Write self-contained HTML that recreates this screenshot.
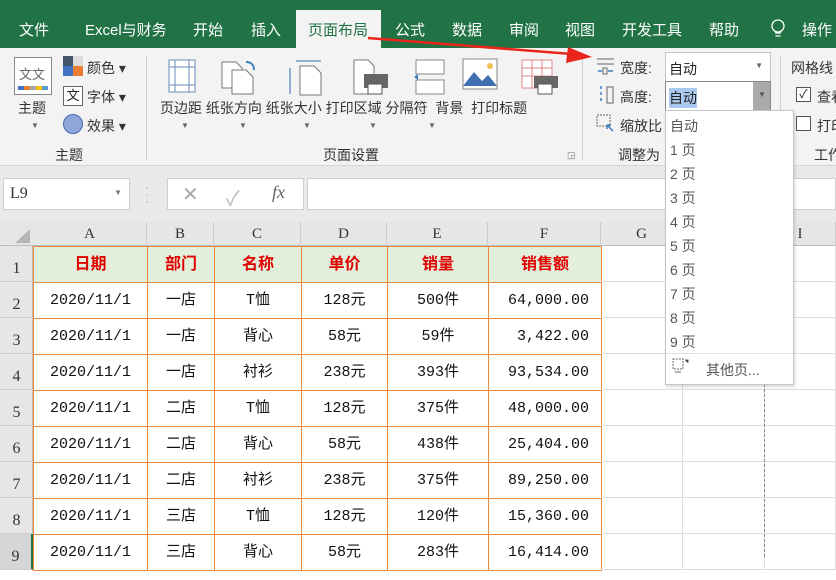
<!DOCTYPE html>
<html><head><meta charset="utf-8"><style>
*{margin:0;padding:0;box-sizing:border-box}
body{width:836px;height:557px;overflow:hidden;position:relative;background:#fff;font-family:"Liberation Sans","Noto Sans CJK SC",sans-serif;font-size:14px;color:#222}
.a{position:absolute;white-space:nowrap}
.tab{position:absolute;top:19px;color:#fff;font-size:15px}
.rb{color:#333;font-size:14px}
.grid div{position:absolute}
.cell{font-family:"Liberation Mono","Noto Sans CJK SC",monospace;font-size:15px;color:#111;text-align:center;line-height:36px}
.hd{color:#e00000;font-weight:bold;font-size:16px}
.dd{position:absolute;left:670px;font-size:14px;color:#555}
</style></head><body>
<!-- tab bar -->
<div class="a" style="left:0;top:0;width:836px;height:48px;background:#217346"></div>
<div class="a" style="left:296px;top:10px;width:85px;height:38px;background:#f3f3f3"></div>
<div class="tab" style="left:19px">文件</div>
<div class="tab" style="left:85px">Excel与财务</div>
<div class="tab" style="left:193px">开始</div>
<div class="tab" style="left:251px">插入</div>
<div class="tab" style="left:308px;color:#217346">页面布局</div>
<div class="tab" style="left:395px">公式</div>
<div class="tab" style="left:452px">数据</div>
<div class="tab" style="left:509px">审阅</div>
<div class="tab" style="left:565px">视图</div>
<div class="tab" style="left:622px">开发工具</div>
<div class="tab" style="left:709px">帮助</div>
<svg class="a" style="left:770px;top:18px" width="16" height="22"><circle cx="8" cy="8" r="6" fill="none" stroke="#fff" stroke-width="1.3"/><path d="M5 15h6M5.5 18h5" stroke="#fff" stroke-width="1.3"/></svg>
<div class="tab" style="left:802px">操作</div>
<!-- ribbon -->
<div class="a" style="left:0;top:48px;width:836px;height:118px;background:#f3f3f3;border-bottom:1px solid #d6d6d6"></div>
<div class="a" style="left:146px;top:56px;width:1px;height:104px;background:#d0d0d0"></div>
<div class="a" style="left:582px;top:56px;width:1px;height:104px;background:#d0d0d0"></div>
<div class="a" style="left:780px;top:56px;width:1px;height:104px;background:#d0d0d0"></div>
<!-- theme -->
<div class="a" style="left:14px;top:57px;width:38px;height:38px;border:1px solid #888;background:#fff"><div style="position:absolute;left:4px;top:6px;font-size:13px;color:#666">文文</div><div style="position:absolute;left:3px;bottom:4px;width:30px;height:4px;background:linear-gradient(90deg,#4472c4 20%,#ed7d31 20% 40%,#a5a5a5 40% 60%,#ffc000 60% 80%,#5b9bd5 80%)"></div></div>
<div class="a rb" style="left:18px;top:98px">主题</div>
<div class="a" style="left:31px;top:121px;font-size:8px;color:#666">▼</div>
<div class="a" style="left:63px;top:56px;width:20px;height:20px;background:linear-gradient(90deg,#44546a 50%,#ddd 50%)"><div style="position:absolute;left:0;top:10px;width:10px;height:10px;background:#4472c4"></div><div style="position:absolute;left:10px;top:10px;width:10px;height:10px;background:#ed7d31"></div></div>
<div class="a rb" style="left:87px;top:58px">颜色 ▾</div>
<div class="a" style="left:63px;top:86px;width:20px;height:20px;border:1px solid #666;background:#fff;font-size:13px;line-height:18px;text-align:center">文</div>
<div class="a rb" style="left:87px;top:87px">字体 ▾</div>
<div class="a" style="left:63px;top:114px;width:20px;height:20px;border-radius:50%;background:#8fa6d8;border:1px solid #4a6ab0"></div>
<div class="a rb" style="left:87px;top:116px">效果 ▾</div>
<div class="a rb" style="left:55px;top:145px">主题</div>
<!-- page setup icons -->
<svg class="a" style="left:167px;top:58px" width="30" height="36"><rect x="2" y="2" width="26" height="32" fill="#fff" stroke="#6b8bb8"/><path d="M8 2v32M22 2v32M2 9h26M2 27h26" stroke="#6b8bb8"/></svg>
<svg class="a" style="left:220px;top:56px" width="40" height="40"><path d="M2 6h14l6 6v20H2z" fill="#fff" stroke="#777"/><path d="M12 14h14l7 7v17H12z" fill="#fff" stroke="#777"/><path d="M26 6c6 0 8 4 8 8" fill="none" stroke="#3f7fc0" stroke-width="2"/></svg>
<svg class="a" style="left:288px;top:58px" width="36" height="38"><path d="M12 8h14l7 7v22H12z" fill="#fff" stroke="#777"/><path d="M2 10v26M8 3h25" stroke="#5b86c0" stroke-width="1.3"/></svg>
<svg class="a" style="left:352px;top:58px" width="38" height="38"><path d="M2 2h14l6 6v28H2z" fill="#fff" stroke="#777"/><rect x="12" y="16" width="24" height="14" fill="#666"/><rect x="16" y="26" width="14" height="10" fill="#fff" stroke="#555"/></svg>
<svg class="a" style="left:414px;top:58px" width="32" height="38"><rect x="2" y="2" width="28" height="14" fill="#fff" stroke="#888"/><rect x="2" y="22" width="28" height="14" fill="#fff" stroke="#888"/><path d="M0 19l4-3v6z" fill="#3f7fc0"/></svg>
<svg class="a" style="left:462px;top:58px" width="36" height="34"><rect x="1" y="1" width="34" height="30" fill="#fff" stroke="#888"/><path d="M1 28l11-14 8 9 6-6 9 11z" fill="#3f6fb0"/><circle cx="28" cy="8" r="3" fill="#f0c050"/></svg>
<svg class="a" style="left:520px;top:58px" width="40" height="38"><path d="M2 2h30v28H2z" fill="#fff" stroke="#d88"/><path d="M2 10h30M2 18h30M12 2v28M22 2v28" stroke="#d88"/><rect x="14" y="18" width="24" height="12" fill="#666"/><rect x="18" y="26" width="14" height="10" fill="#fff" stroke="#555"/></svg>
<div class="a rb" style="left:160px;top:98px">页边距 纸张方向 纸张大小 打印区域 分隔符 &nbsp;背景 &nbsp;打印标题</div>
<div class="a" style="left:181px;top:121px;font-size:8px;color:#666">▼</div>
<div class="a" style="left:239px;top:121px;font-size:8px;color:#666">▼</div>
<div class="a" style="left:303px;top:121px;font-size:8px;color:#666">▼</div>
<div class="a" style="left:369px;top:121px;font-size:8px;color:#666">▼</div>
<div class="a" style="left:428px;top:121px;font-size:8px;color:#666">▼</div>
<div class="a rb" style="left:323px;top:145px">页面设置</div>
<div class="a" style="left:567px;top:150px;font-size:9px;color:#777">◲</div>
<!-- scale to fit -->
<svg class="a" style="left:596px;top:57px" width="20" height="20"><path d="M1 2h17M1 7h17" stroke="#666"/><path d="M2 14h4M12 14h5" stroke="#3f7fc0" stroke-width="1.5"/><rect x="7" y="11" width="4" height="6" fill="none" stroke="#666"/></svg>
<div class="a rb" style="left:620px;top:58px">宽度:</div>
<div class="a" style="left:665px;top:52px;width:106px;height:30px;background:#fff;border:1px solid #c6c6c6"><span style="position:absolute;left:3px;top:6px;font-size:14px">自动</span><span style="position:absolute;right:7px;top:8px;font-size:8px;color:#666">▼</span></div>
<svg class="a" style="left:596px;top:85px" width="20" height="20"><path d="M5 1v17" stroke="#3f7fc0" stroke-width="1.5" stroke-dasharray="3 3"/><rect x="11" y="2" width="6" height="16" fill="none" stroke="#666"/></svg>
<div class="a rb" style="left:620px;top:87px">高度:</div>
<div class="a" style="left:665px;top:81px;width:106px;height:30px;background:#fff;border:1px solid #888"><span style="position:absolute;left:3px;top:6px;font-size:14px;background:#a9c9ef">自动</span><div style="position:absolute;right:0;top:0;width:17px;height:28px;background:#aaa"><span style="position:absolute;left:5px;top:8px;font-size:8px;color:#555">▼</span></div></div>
<svg class="a" style="left:596px;top:114px" width="20" height="20"><rect x="1" y="1" width="13" height="11" fill="none" stroke="#666" stroke-dasharray="2 1"/><path d="M17 17l-6-6M11 11v4M11 11h4" stroke="#3f7fc0" stroke-width="1.5"/></svg>
<div class="a rb" style="left:620px;top:116px">缩放比</div>
<div class="a rb" style="left:618px;top:145px">调整为</div>
<!-- sheet options -->
<div class="a rb" style="left:791px;top:58px">网格线</div>
<div class="a" style="left:796px;top:87px;width:15px;height:15px;border:1px solid #555;background:#fff;font-size:12px;line-height:13px;text-align:center">✓</div>
<div class="a rb" style="left:817px;top:87px">查看</div>
<div class="a" style="left:796px;top:116px;width:15px;height:15px;border:1px solid #555;background:#fff"></div>
<div class="a rb" style="left:817px;top:116px">打印</div>
<div class="a rb" style="left:814px;top:145px">工作</div>
<!-- formula bar -->
<div class="a" style="left:0;top:166px;width:836px;height:56px;background:#e9e9e9"></div>
<div class="a" style="left:3px;top:178px;width:127px;height:32px;background:#fff;border:1px solid #d0d0d0"><span style="position:absolute;left:6px;top:6px;font-family:'Liberation Serif',serif;font-size:16px;color:#333">L9</span><span style="position:absolute;right:7px;top:9px;font-size:8px;color:#777">▼</span></div>
<div class="a" style="left:145px;top:184px;color:#aaa;font-size:12px;line-height:7px">·<br>·<br>·</div>
<div class="a" style="left:167px;top:178px;width:137px;height:32px;background:#fff;border:1px solid #d0d0d0"><span style="position:absolute;left:14px;top:3px;font-size:20px;color:#aaa">✕</span><span style="position:absolute;left:58px;top:3px;font-size:20px;color:#bbb">✓</span><span style="position:absolute;left:104px;top:3px;font-size:18px;color:#666;font-family:'Liberation Serif',serif;font-style:italic">fx</span></div>
<div class="a" style="left:307px;top:178px;width:529px;height:32px;background:#fff;border:1px solid #d0d0d0"></div>
<!-- grid -->
<div class="a" style="left:0;top:222px;width:836px;height:24px;background:#e6e6e6;border-bottom:1px solid #bbb"></div>
<div class="a" style="left:0;top:246px;width:33px;height:311px;background:#e6e6e6;border-right:1px solid #bbb"></div>
<svg class="a" style="left:14px;top:228px" width="17" height="16"><path d="M16 1v14H1z" fill="#b5b5b5"/></svg>
<div class="grid" id="g"></div>
<!-- dashed page break -->
<div class="a" style="left:764px;top:384px;width:0;height:173px;border-left:1px dashed #888"></div>
<!-- dropdown -->
<div class="a" style="left:665px;top:110px;width:129px;height:275px;background:#fff;border:1px solid #c6c6c6;box-shadow:1px 2px 3px rgba(0,0,0,.15)"></div>
<div class="dd" style="top:116px">自动</div>
<div class="dd" style="top:140px">1 页</div>
<div class="dd" style="top:164px">2 页</div>
<div class="dd" style="top:188px">3 页</div>
<div class="dd" style="top:212px">4 页</div>
<div class="dd" style="top:236px">5 页</div>
<div class="dd" style="top:260px">6 页</div>
<div class="dd" style="top:284px">7 页</div>
<div class="dd" style="top:308px">8 页</div>
<div class="dd" style="top:332px">9 页</div>
<div class="a" style="left:666px;top:353px;width:127px;height:1px;background:#e0e0e0"></div>
<svg class="a" style="left:672px;top:358px" width="18" height="18"><rect x="1" y="1" width="10" height="10" fill="none" stroke="#666" stroke-dasharray="2 1"/><path d="M13 2h3v3M3 14h6" stroke="#666"/></svg>
<div class="dd" style="top:360px;left:706px">其他页...</div>
<!-- arrow -->
<svg class="a" style="left:0;top:0" width="836" height="80"><path d="M368 38L572 54" stroke="#e8261c" stroke-width="2.5"/><path d="M592 57L568 47L566 63z" fill="#e8261c"/></svg>
<script>
var cols=[33,147,214,301,387,488,601,683,765,836],L=['A','B','C','D','E','F','G','H','I'];
var g=document.getElementById('g'),h='';
for(var i=0;i<9;i++){h+='<div class="cell" style="left:'+cols[i]+'px;top:222px;width:'+(cols[i+1]-cols[i])+'px;height:24px;line-height:24px;font-family:Liberation Serif,serif;font-size:15px;color:#333;border-right:1px solid #ccc">'+(L[i]=='H'?'':L[i])+'</div>';}
var rows=[246,282,318,354,390,426,462,498,534,570];
var D=[['日期','部门','名称','单价','销量','销售额'],
['2020/11/1','一店','T恤','128元','500件','64,000.00'],
['2020/11/1','一店','背心','58元','59件','3,422.00'],
['2020/11/1','一店','衬衫','238元','393件','93,534.00'],
['2020/11/1','二店','T恤','128元','375件','48,000.00'],
['2020/11/1','二店','背心','58元','438件','25,404.00'],
['2020/11/1','二店','衬衫','238元','375件','89,250.00'],
['2020/11/1','三店','T恤','128元','120件','15,360.00'],
['2020/11/1','三店','背心','58元','283件','16,414.00']];
for(var r=0;r<9;r++){
 h+='<div class="cell" style="left:0;top:'+rows[r]+'px;width:33px;height:36px;line-height:46px;font-family:Liberation Serif,serif;font-size:16px;color:#333;border-bottom:1px solid #ccc;'+(r==8?'border-right:2px solid #217346;background:#d6d6d6':'')+'">'+(r+1)+'</div>';
 for(var c=0;c<9;c++){
  var w=cols[c+1]-cols[c];
  if(c<6){var t=D[r][c];var st='left:'+cols[c]+'px;top:'+rows[r]+'px;width:'+(w+1)+'px;height:37px;border:1px solid #ed8a3a;'+(r==0?'background:#e2efda;':'background:#fff;')+(c==5&&r>0?'text-align:right;padding-right:12px;':'');
   h+='<div class="cell'+(r==0?' hd':'')+'" style="'+st+'">'+t+'</div>';}
  else h+='<div style="left:'+cols[c]+'px;top:'+rows[r]+'px;width:'+w+'px;height:36px;border-right:1px solid #ddd;border-bottom:1px solid #ddd"></div>';
 }}
g.innerHTML=h;
</script>
</body></html>
